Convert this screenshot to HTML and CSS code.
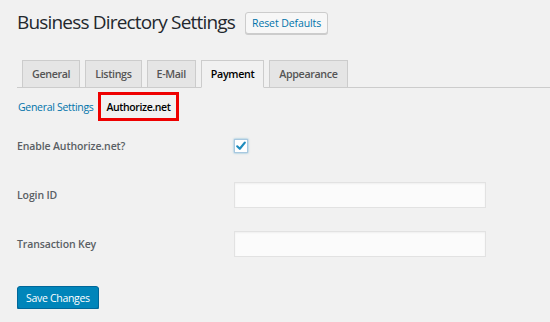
FILE: index.html
```html
<!DOCTYPE html>
<html>
<head>
<meta charset="utf-8">
<link rel="stylesheet" href="styles.css">
</head>
<body>
<div class="wrap">
  <div class="header">
    <h1 class="title">Business Directory Settings</h1>
    <span class="btn-secondary">Reset Defaults</span>
  </div>
  <div class="tabs">
    <span class="tab">General</span>
    <span class="tab">Listings</span>
    <span class="tab">E-Mail</span>
    <span class="tab tab-active">Payment</span>
    <span class="tab">Appearance</span>
  </div>
  <div class="subnav">
    <a class="sublink">General Settings</a>
    <span class="subcurrent">Authorize.net</span>
  </div>
  <div class="form">
    <div class="row">
      <label class="label">Enable Authorize.net?</label>
      <span class="checkbox">
        <svg width="12" height="12" viewBox="0 0 12 12"><path d="M2.2 6.3 L4.8 8.8 L9.8 2.6" fill="none" stroke="#1e8cbe" stroke-width="2.2" stroke-linecap="round" stroke-linejoin="round"/></svg>
      </span>
    </div>
    <div class="row">
      <label class="label">Login ID</label>
      <span class="input"></span>
    </div>
    <div class="row">
      <label class="label">Transaction Key</label>
      <span class="input"></span>
    </div>
  </div>
  <span class="btn-primary">Save Changes</span>
</div>
</body>
</html>
```
FILE: styles.css
```css
html, body {
  margin: 0;
  padding: 0;
  background: #f1f1f1;
}
body {
  font-family: "Open Sans", "Noto Sans", sans-serif;
  color: #23282d;
}
.wrap {
  padding: 11px 0 0 17px;
}
.header {
  display: flex;
  align-items: center;
  gap: 10px;
  height: 23px;
}
.title {
  margin: 0;
  font-size: 19px;
  font-weight: 400;
  color: #23282d;
  line-height: 23px;
  letter-spacing: -0.82px;
}
.btn-secondary {
  display: inline-flex;
  align-items: center;
  height: 20px;
  padding: 0 6px;
  border: 1px solid #cccccc;
  border-radius: 3px;
  background: #f7f7f7;
  box-shadow: 0 1px 0 #cccccc;
  color: #0073aa;
  font-size: 10.5px;
  letter-spacing: -0.1px;
}
.tabs {
  display: flex;
  gap: 5px;
  margin-top: 26px;
  padding-left: 5px;
  border-bottom: 1px solid #cccccc;
  height: 27px;
  align-items: flex-end;
}
.tab {
  display: flex;
  align-items: center;
  height: 28px;
  box-sizing: border-box;
  padding: 0 9px;
  margin-bottom: -1px;
  border: 1px solid #cccccc;
  background: #e5e5e5;
  color: #555555;
  font-size: 10.7px;
  font-weight: 600;
  letter-spacing: -0.35px;
}
.tab-active {
  background: #f1f1f1;
  color: #000000;
  border-bottom-color: #f1f1f1;
}
.subnav {
  display: flex;
  align-items: center;
  margin-top: 4px;
  padding-left: 1px;
  height: 29px;
}
.sublink {
  color: #0073aa;
  font-size: 10.5px;
  letter-spacing: -0.3px;
  margin-right: 4px;
}
.subcurrent {
  display: flex;
  align-items: center;
  box-sizing: border-box;
  height: 29px;
  padding: 0 6px;
  border: 3px solid #ee0000;
  color: #000000;
  font-size: 10.5px;
  font-weight: 600;
  letter-spacing: -0.4px;
}
.form {
  display: flex;
  flex-direction: column;
  gap: 23px;
  margin-top: 12px;
}
.row {
  display: flex;
  align-items: center;
  height: 26px;
}
.label {
  width: 217px;
  font-size: 10.5px;
  font-weight: 600;
  letter-spacing: -0.12px;
  color: #5a5f64;
}
.checkbox {
  display: flex;
  align-items: center;
  justify-content: center;
  width: 14px;
  height: 14px;
  box-sizing: border-box;
  border: 1px solid #a8c8e0;
  background: #ffffff;
  box-shadow: 0 0 2px rgba(30, 140, 190, 0.6);
}
.input {
  width: 252px;
  height: 26px;
  box-sizing: border-box;
  border: 1px solid #e2e2e2;
  background: #fbfbfb;
  box-shadow: inset 0 1px 2px rgba(0, 0, 0, 0.05);
}
.btn-primary {
  display: inline-flex;
  align-items: center;
  margin-top: 29px;
  height: 23px;
  box-sizing: border-box;
  padding: 0 8px;
  background: #0085ba;
  border: 1px solid #006799;
  border-radius: 3px;
  color: #ffffff;
  font-size: 10.5px;
  letter-spacing: -0.3px;
  box-shadow: 0 1px 0 #006799;
}
```
